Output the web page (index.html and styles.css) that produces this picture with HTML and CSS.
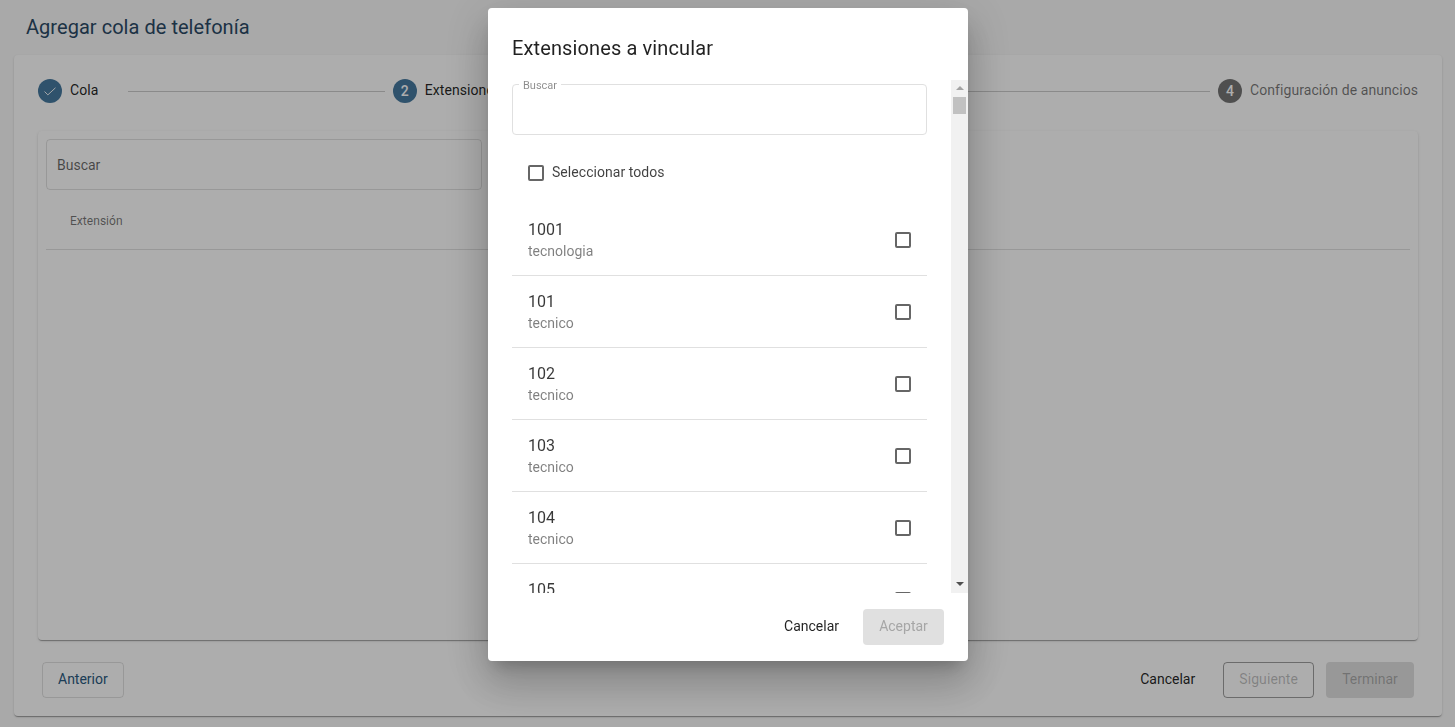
FILE: index.html
```html
<!DOCTYPE html>
<html lang="es">
<head>
<meta charset="utf-8">
<title>Agregar cola de telefonía</title>
<link rel="stylesheet" href="styles.css">
</head>
<body>
<main class="page">
  <h1 class="page-title">Agregar cola de telefonía</h1>
  <section class="card">
    <div class="stepper">
      <div class="step">
        <span class="step-icon done">
          <svg viewBox="0 0 24 24" width="16" height="16"><path d="M3.8 12.8l5 5L20.2 7.2" fill="none" stroke="#fff" stroke-width="1.4"/></svg>
        </span>
        <span class="step-label">Cola</span>
      </div>
      <div class="step-line"></div>
      <div class="step">
        <span class="step-icon done">2</span>
        <span class="step-label">Extensiones</span>
      </div>
      <div class="step-line"></div>
      <div class="step step-hidden">
        <span class="step-icon">3</span>
        <span class="step-label">Agentes</span>
      </div>
      <div class="step-line"></div>
      <div class="step">
        <span class="step-icon">4</span>
        <span class="step-label muted">Configuración de anuncios</span>
      </div>
    </div>
    <div class="table-card">
      <div class="filter">Buscar</div>
      <div class="table-head"><span>Extensión</span></div>
    </div>
    <div class="actions">
      <button class="btn btn-outline primary-text">Anterior</button>
      <div class="actions-right">
        <button class="btn btn-text">Cancelar</button>
        <button class="btn btn-outline disabled-text siguiente">Siguiente</button>
        <button class="btn btn-flat-disabled terminar">Terminar</button>
      </div>
    </div>
  </section>
</main>

<div class="backdrop">
  <div class="dialog">
    <h2 class="dialog-title">Extensiones a vincular</h2>
    <div class="dialog-body">
      <div class="dialog-scroll">
        <div class="search">
          <span class="search-label">Buscar</span>
        </div>
        <label class="select-all">
          <span class="check"></span>
          <span>Seleccionar todos</span>
        </label>
        <ul class="list">
          <li class="row"><div><div class="num">1001</div><div class="sub">tecnologia</div></div><span class="check"></span></li>
          <li class="row"><div><div class="num">101</div><div class="sub">tecnico</div></div><span class="check"></span></li>
          <li class="row"><div><div class="num">102</div><div class="sub">tecnico</div></div><span class="check"></span></li>
          <li class="row"><div><div class="num">103</div><div class="sub">tecnico</div></div><span class="check"></span></li>
          <li class="row"><div><div class="num">104</div><div class="sub">tecnico</div></div><span class="check"></span></li>
          <li class="row"><div><div class="num">105</div><div class="sub">tecnico</div></div><span class="check"></span></li>
        </ul>
      </div>
      <div class="scrollbar">
        <span class="arrow arrow-up"></span>
        <span class="thumb"></span>
        <span class="arrow arrow-down"></span>
      </div>
    </div>
    <div class="dialog-actions">
      <button class="btn btn-text">Cancelar</button>
      <button class="btn btn-accept">Aceptar</button>
    </div>
  </div>
</div>
</body>
</html>
```

FILE: styles.css
```css
* { box-sizing: border-box; }
html, body { height: 100%; }
body {
  margin: 0;
  overflow: hidden;
  background: #fafafa;
  font-family: Roboto, "Liberation Sans", sans-serif;
  font-size: 14px;
  color: rgba(0,0,0,.87);
}
.page { height: 727px; padding: 0 13px 11px 14px; display: flex; flex-direction: column; }
.page-title {
  margin: 0;
  height: 55px;
  padding: 15px 12px 0;
  font-size: 20px;
  line-height: 24px;
  font-weight: 400;
  letter-spacing: .04px;
  color: #2c4a66;
}
.card {
  flex: 1;
  display: flex;
  flex-direction: column;
  background: #fff;
  border-radius: 4px;
  box-shadow: 0 2px 1px -1px rgba(0,0,0,.2), 0 1px 1px 0 rgba(0,0,0,.14), 0 1px 3px 0 rgba(0,0,0,.12);
  padding: 0 24px 18px;
}
.stepper { height: 72px; margin-bottom: 4px; display: flex; align-items: center; }
.step { display: flex; align-items: center; gap: 8px; }
.step-hidden { width: 128px; }
.step-icon {
  width: 24px;
  height: 24px;
  border-radius: 50%;
  background: rgba(0,0,0,.54);
  color: #fff;
  font-size: 14px;
  font-weight: 500;
  display: flex;
  align-items: center;
  justify-content: center;
  flex: none;
}
.step-icon.done { background: #46799f; }
.step-label { line-height: 20px; position: relative; top: -1px; letter-spacing: .07px; }
.step-label.muted { color: rgba(0,0,0,.54); }
.step-line { flex: 1; height: 1px; background: rgba(0,0,0,.2); margin: 1px 8px 0 30px; }
.table-card {
  flex: 1;
  background: #fff;
  border-radius: 4px;
  box-shadow: 0 2px 1px -1px rgba(0,0,0,.2), 0 1px 1px 0 rgba(0,0,0,.14), 0 1px 3px 0 rgba(0,0,0,.12);
  padding: 8px;
}
.filter {
  width: 436px;
  height: 51px;
  border: 1px solid rgba(0,0,0,.12);
  border-radius: 4px;
  padding: 0 10px;
  display: flex;
  align-items: center;
  font-size: 14px;
  color: rgba(0,0,0,.6);
}
.table-head {
  height: 60px;
  padding: 2px 24px 0;
  display: flex;
  align-items: center;
  font-size: 12px;
  letter-spacing: .04px;
  color: rgba(0,0,0,.54);
  border-bottom: 1px solid rgba(0,0,0,.12);
}
.actions { display: flex; justify-content: space-between; padding: 22px 4px 0; }
.actions-right { display: flex; gap: 12px; }
.btn {
  height: 36px;
  min-width: 64px;
  padding: 0 16px 2px;
  border-radius: 4px;
  border: 0;
  background: transparent;
  font-family: inherit;
  font-size: 14px;
  font-weight: 400;
  color: rgba(0,0,0,.87);
  display: inline-flex;
  align-items: center;
  justify-content: center;
}
.btn-outline { border: 1px solid rgba(0,0,0,.12); padding: 0 15px 2px; }
.primary-text { color: #2c5a80; }
.disabled-text { color: rgba(0,0,0,.26); letter-spacing: .1px; }
.siguiente { border-color: rgba(0,0,0,.38); }
.btn-flat-disabled { background: rgba(0,0,0,.12); color: rgba(0,0,0,.26); }
.terminar { width: 88px; }
.backdrop {
  position: fixed;
  inset: 0;
  background: rgba(0,0,0,.32);
  display: flex;
  justify-content: center;
  align-items: flex-start;
  padding: 8px 0 0 1px;
}
.dialog {
  width: 480px;
  height: 653px;
  background: #fff;
  border-radius: 4px;
  box-shadow: 0 11px 15px -7px rgba(0,0,0,.2), 0 24px 38px 3px rgba(0,0,0,.14), 0 9px 46px 8px rgba(0,0,0,.12);
  display: flex;
  flex-direction: column;
}
.dialog-title {
  margin: 0;
  height: 72px;
  padding: 28px 24px 0;
  font-size: 20px;
  line-height: 24px;
  font-weight: 400;
  letter-spacing: .12px;
}
.dialog-body { height: 513px; display: flex; }
.dialog-scroll { flex: 1; min-width: 0; overflow: hidden; padding: 4px 24px 0; }
.search {
  height: 51px;
  border: 1px solid #e0e0e0;
  border-radius: 4px;
  position: relative;
}
.search-label {
  position: absolute;
  top: -5px;
  left: 6px;
  padding: 0 4px;
  background: #fff;
  font-size: 11px;
  line-height: 12px;
  color: rgba(0,0,0,.45);
}
.select-all {
  display: flex;
  align-items: center;
  gap: 8px;
  height: 18px;
  margin: 28px 0 0 16px;
  line-height: 16px;
  letter-spacing: .05px;
  color: rgba(0,0,0,.75);
}
.select-all .check { transform: translateY(1px); }
.check {
  width: 16px;
  height: 16px;
  border: 2px solid #666;
  border-radius: 2px;
  flex: none;
}
.list { list-style: none; margin: 23px 0 0; padding: 0; }
.row {
  height: 72px;
  display: flex;
  align-items: center;
  justify-content: space-between;
  padding: 0 16px;
  border-bottom: 1px solid #e0e0e0;
}
.num { font-size: 16px; line-height: 24px; color: rgba(0,0,0,.78); }
.sub { font-size: 14px; line-height: 20px; margin-top: -1px; color: rgba(0,0,0,.5); }
.scrollbar {
  width: 17px;
  flex: none;
  background: #f1f1f1;
  display: flex;
  flex-direction: column;
  align-items: center;
}
.arrow { width: 0; height: 0; border-left: 4px solid transparent; border-right: 4px solid transparent; }
.arrow-up { border-bottom: 4px solid #a3a3a3; margin-top: 6px; }
.arrow-down { border-top: 4px solid #505050; margin-top: auto; margin-bottom: 7px; }
.thumb { width: 13px; height: 17px; background: #c1c1c1; margin-top: 7px; }
.dialog-actions { display: flex; justify-content: flex-end; align-items: flex-start; gap: 8px; padding: 16px 24px 0; }
.btn-accept { width: 81px; background: #e0e0e0; color: #a6a6a6; }
```
